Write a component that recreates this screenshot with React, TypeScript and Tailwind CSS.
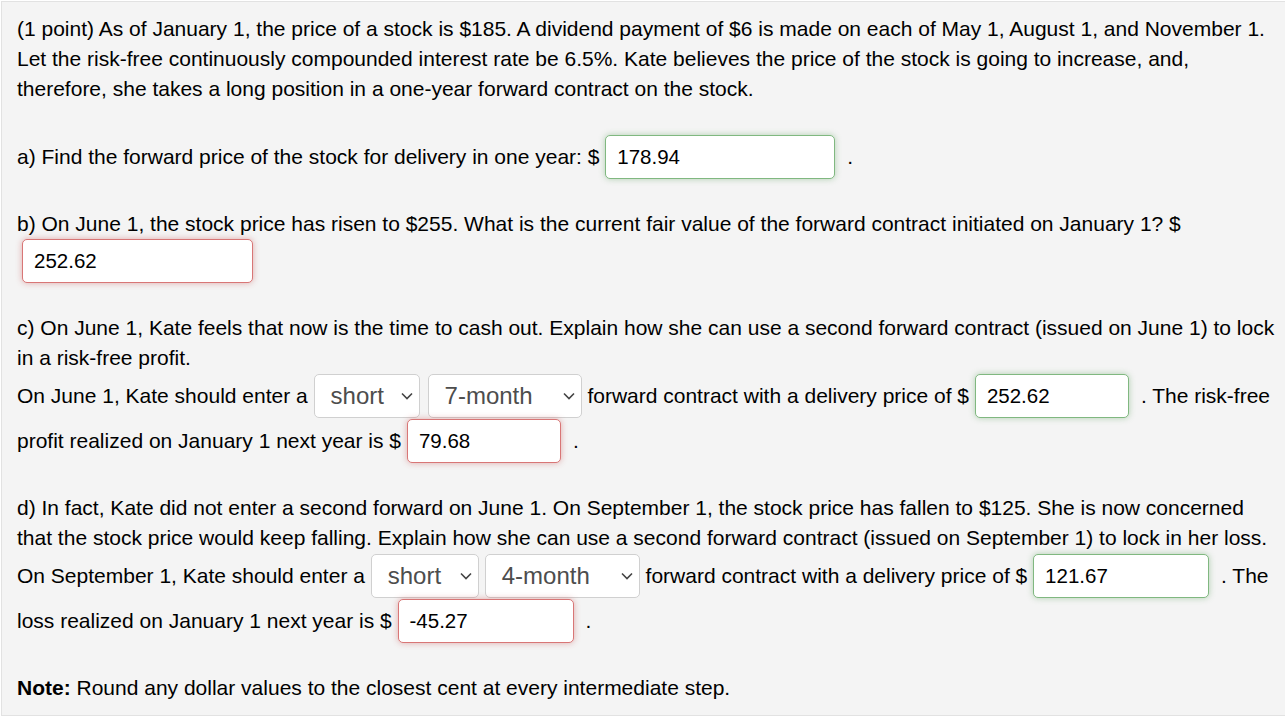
type Status = 'ok' | 'bad';

function Answer({ value, status, width }: { value: string; status: Status; width: string }) {
  const tone =
    status === 'ok'
      ? 'border-[#80b880] shadow-[0_0_6px_rgba(90,160,90,0.45)]'
      : 'border-[#d87676] shadow-[0_0_6px_rgba(200,80,80,0.45)]';
  return (
    <span
      className={`inline-flex items-center h-[44px] ${width} shrink-0 align-middle rounded-[5px] border bg-white pl-[11px] pt-px text-[20.5px] text-black ${tone}`}
    >
      {value}
    </span>
  );
}

function Pick({ value, width }: { value: string; width: string }) {
  return (
    <span
      className={`inline-flex items-center justify-between h-[44px] ${width} shrink-0 align-middle rounded-[5px] border border-[#d0d0d0] bg-white pl-[16px] pr-[6px] text-[24px] text-[#4d4d4d]`}
    >
      {value}
      <svg width="12" height="8" viewBox="0 0 12 8">
        <polyline points="1,1.5 6,6.5 11,1.5" fill="none" stroke="#444" strokeWidth="1.6" />
      </svg>
    </span>
  );
}

function Line({ children, tall }: { children: React.ReactNode; tall?: boolean }) {
  return (
    <div className={`flex items-center whitespace-pre ${tall ? 'h-[45px]' : 'h-[30px]'}`}>
      {children}
    </div>
  );
}

export default function App() {
  return (
    <div className="bg-white pl-px pt-px w-[1285px] h-[717px] overflow-hidden">
      <div
        className="h-[715px] border-l border-t border-b border-[#e2e2e2] bg-[#f4f4f4] pl-[15px] pt-[12px] text-[21px] text-black"
        style={{ fontFamily: '"Liberation Sans", Arial, sans-serif' }}
      >
        <Line>(1 point) As of January 1, the price of a stock is $185. A dividend payment of $6 is made on each of May 1, August 1, and November 1.</Line>
        <Line>Let the risk-free continuously compounded interest rate be 6.5%. Kate believes the price of the stock is going to increase, and,</Line>
        <Line>therefore, she takes a long position in a one-year forward contract on the stock.</Line>
        <div className="h-[30px]" />

        <Line tall>
          a) Find the forward price of the stock for delivery in one year: ${' '}
          <Answer value="178.94" status="ok" width="w-[230px]" />
          <span className="ml-[12px]">.</span>
        </Line>
        <div className="h-[30px]" />

        <Line>b) On June 1, the stock price has risen to $255. What is the current fair value of the forward contract initiated on January 1? $</Line>
        <div className="flex items-center h-[44px] pl-[5px]">
          <Answer value="252.62" status="bad" width="w-[231px]" />
        </div>
        <div className="h-[30px]" />

        <Line>c) On June 1, Kate feels that now is the time to cash out. Explain how she can use a second forward contract (issued on June 1) to lock</Line>
        <Line>in a risk-free profit.</Line>
        <Line tall>
          On June 1, Kate should enter a{' '}
          <Pick value="short" width="w-[106px]" />
          <span className="w-[8px]" />
          <Pick value="7-month" width="w-[154px]" />
          <span> forward contract with a delivery price of $ </span>
          <Answer value="252.62" status="ok" width="w-[154px]" />
          <span className="ml-[12px]">. The risk-free</span>
        </Line>
        <Line tall>
          profit realized on January 1 next year is ${' '}
          <Answer value="79.68" status="bad" width="w-[154px]" />
          <span className="ml-[12px]">.</span>
        </Line>
        <div className="h-[30px]" />

        <Line>d) In fact, Kate did not enter a second forward on June 1. On September 1, the stock price has fallen to $125. She is now concerned</Line>
        <Line>that the stock price would keep falling. Explain how she can use a second forward contract (issued on September 1) to lock in her loss.</Line>
        <Line tall>
          On September 1, Kate should enter a{' '}
          <Pick value="short" width="w-[108px]" />
          <span className="w-[6px]" />
          <Pick value="4-month" width="w-[155px]" />
          <span> forward contract with a delivery price of $ </span>
          <Answer value="121.67" status="ok" width="w-[176px]" />
          <span className="ml-[12px]">. The</span>
        </Line>
        <Line tall>
          loss realized on January 1 next year is ${' '}
          <Answer value="-45.27" status="bad" width="w-[176px]" />
          <span className="ml-[12px]">.</span>
        </Line>
        <div className="h-[30px]" />

        <Line>
          <b>Note:</b> Round any dollar values to the closest cent at every intermediate step.
        </Line>
      </div>
    </div>
  );
}
